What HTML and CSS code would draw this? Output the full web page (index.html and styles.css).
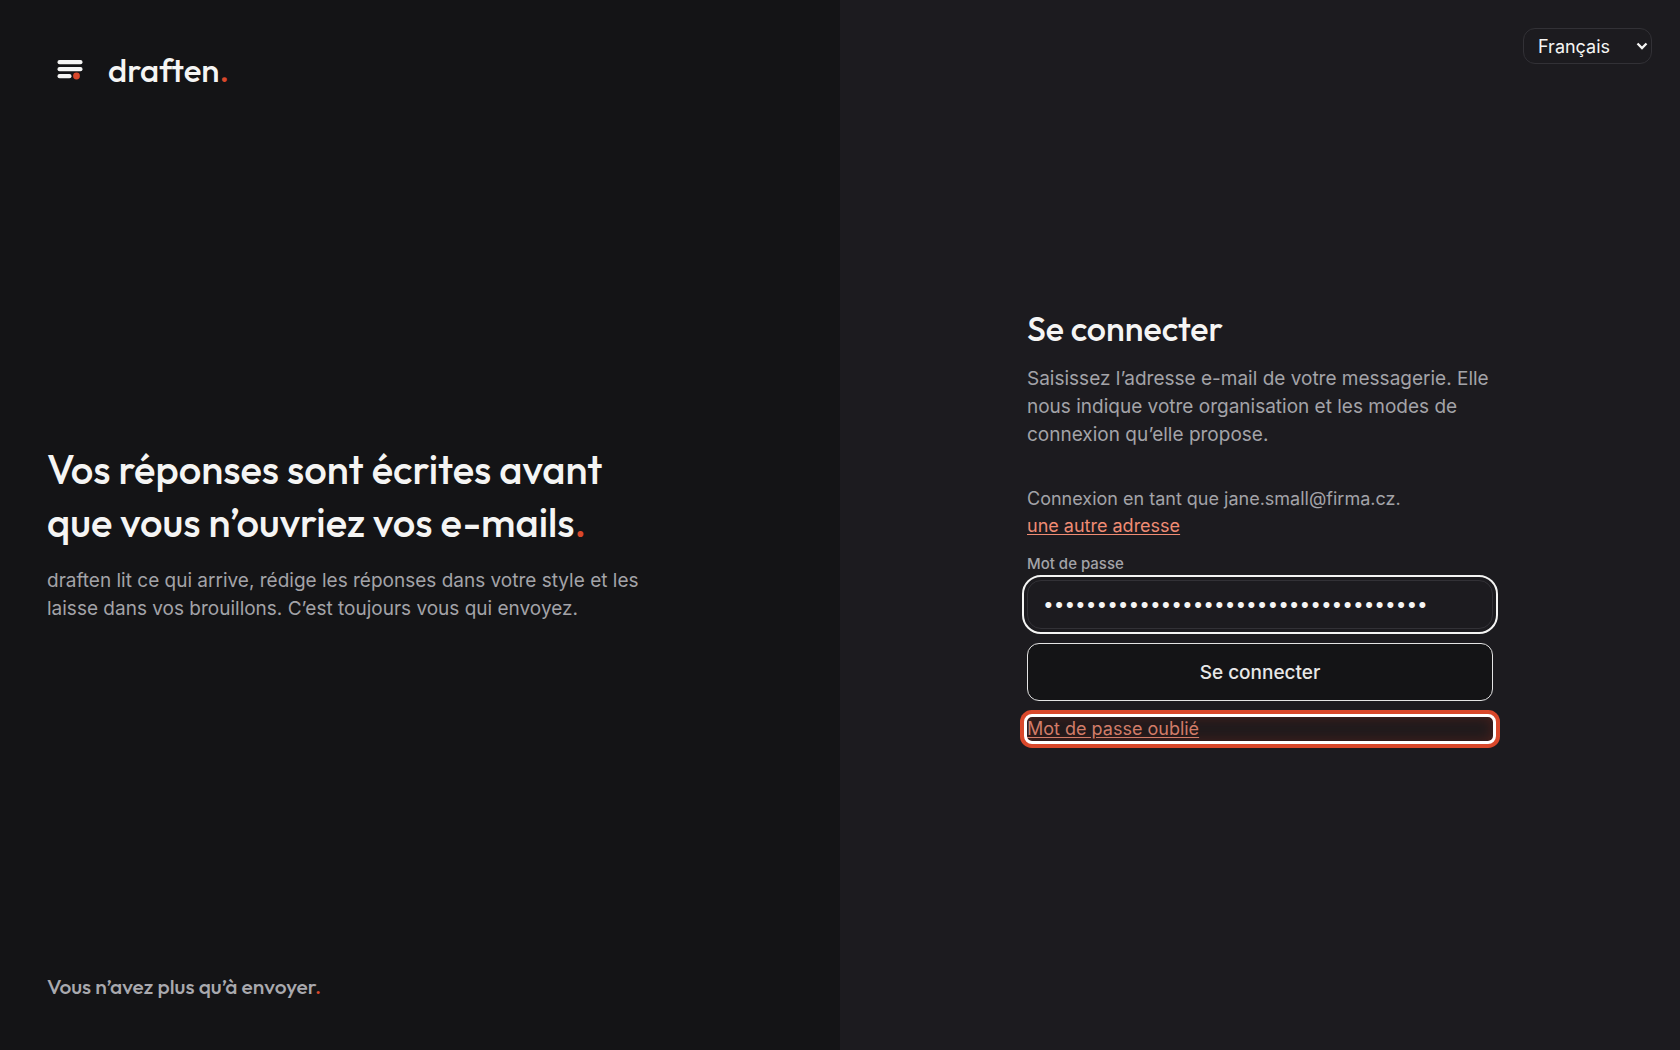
FILE: index.html
```html
<!DOCTYPE html>
<html lang="fr">
<head>
<meta charset="utf-8">
<meta name="viewport" content="width=device-width, initial-scale=1">
<title>draften. – Se connecter</title>
<link rel="stylesheet" href="styles.css">
</head>
<body>
<div class="page">
  <section class="intro">
    <a class="brand" href="#">
      <svg class="brand-mark" viewBox="0 0 46 46" aria-hidden="true">
        <g fill="#f5f5f4">
          <rect x="10.500" y="13" width="25" height="4.300" rx="2"/>
          <rect x="10.500" y="20" width="25" height="4.300" rx="2"/>
          <rect x="10.500" y="27" width="14" height="4.300" rx="2"/>
        </g>
        <circle cx="29.500" cy="29" r="3.400" fill="#d9482b"/>
      </svg>
      <span class="brand-name">draften<span class="dot">.</span></span>
    </a>
    <div class="pitch">
      <h1 class="pitch-title">Vos réponses sont écrites avant<br>que vous n’ouvriez vos e-mails<span class="dot">.</span></h1>
      <p class="pitch-text">draften lit ce qui arrive, rédige les réponses dans votre style et les laisse dans vos brouillons. C’est toujours vous qui envoyez.</p>
    </div>
    <p class="tagline">Vous n’avez plus qu’à envoyer<span class="dot">.</span></p>
  </section>
  <main class="panel">
    <div class="toolbar">
      <div class="language">
        <select class="language-select" aria-label="Langue">
          <option>Français</option>
          <option>English</option>
          <option>Čeština</option>
        </select>
        <svg class="language-arrow" viewBox="0 0 12 8" aria-hidden="true"><path d="M1.500 1.500 6 6l4.500-4.500" fill="none" stroke="#f5f5f4" stroke-width="2.300"/></svg>
      </div>
    </div>
    <div class="login">
      <h2 class="login-title">Se connecter</h2>
      <p class="login-text">Saisissez l’adresse e-mail de votre messagerie. Elle nous indique votre organisation et les modes de connexion qu’elle propose.</p>
      <form class="form">
        <div class="identity">
          <p>Connexion en tant que jane.small@firma.cz.</p>
          <a class="link" href="#">une autre adresse</a>
        </div>
        <div class="field">
          <label class="label" for="password">Mot de passe</label>
          <input class="input" id="password" type="password" value="aaaaaaaaaaaaaaaaaaaaaaaaaaaaaaaaaaaa">
        </div>
        <button class="submit" type="button">Se connecter</button>
        <a class="link forgot" href="#">Mot de passe oublié</a>
      </form>
    </div>
  </main>
</div>
</body>
</html>
```
FILE: styles.css
```css
* { box-sizing: border-box; }

body {
  margin: 0;
  background: #1c1b1f;
  color: #f5f5f4;
  color-scheme: dark;
  font: 18px/28px Inter, "Liberation Sans", sans-serif;
}

h1, h2, p { margin: 0; }

.page {
  display: grid;
  grid-template-columns: 1fr 1fr;
  min-height: 100vh;
}

.intro {
  display: flex;
  flex-direction: column;
  justify-content: space-between;
  padding: 47px 47px 48px;
  background: #141416;
}

.brand {
  display: flex;
  align-items: center;
  gap: 15px;
  color: inherit;
  text-decoration: none;
}

.brand-mark { width: 46px; height: 46px; }

.brand-name,
.pitch-title,
.login-title,
.tagline {
  font-family: Outfit, Lato, sans-serif;
  font-weight: 500;
}

.brand-name { font-size: 33px; line-height: 46px; }
.dot { color: #d9482b; }

.pitch { padding-top: 3px; }
.pitch-title { font-size: 40px; line-height: 53px; }

.pitch-text {
  max-width: 600px;
  margin-top: 18px;
  color: #a3a3a8;
  font-size: 19px;
}

.tagline { color: #a9a9ae; font-size: 21px; line-height: 32px; }

.panel {
  display: flex;
  flex-direction: column;
  padding: 28px;
}

.toolbar { display: flex; justify-content: flex-end; height: 0; }

.language {
  display: grid;
  align-items: center;
  width: 129px;
  height: 36px;
}

.language-select,
.language-arrow { grid-area: 1 / 1; }

.language-select {
  height: 36px;
  padding: 0 14px;
  border: 1px solid #323136;
  border-radius: 12px;
  appearance: none;
  background: #1c1b1f;
  color: #f5f5f4;
  font: 18px Inter, sans-serif;
}

.language-arrow {
  justify-self: end;
  width: 12px;
  height: 8px;
  margin-right: 4px;
  pointer-events: none;
}

.login {
  width: 100%;
  max-width: 466px;
  margin: auto;
  padding-bottom: 2px;
}

.login-title { font-size: 34px; line-height: 44px; }
.login-text { margin-top: 14px; color: #a3a3a8; font-size: 19px; }

.form {
  display: flex;
  flex-direction: column;
  gap: 14px;
  margin-top: 36px;
}

.identity { color: #a3a3a8; line-height: 27px; }
.link { color: #f08c74; text-underline-offset: 2px; }
.field { display: flex; flex-direction: column; gap: 5px; }

.label {
  color: #a3a3a8;
  font-size: 15px;
  font-weight: 500;
  line-height: 22px;
}

.input {
  height: 49px;
  padding: 0 15px;
  border: 1px solid #323136;
  border-radius: 14px;
  outline: 2px solid #f5f5f4;
  outline-offset: 3px;
  background: #1c1b1f;
  color: #f5f5f4;
  font: 19px Inter, sans-serif;
}

.submit {
  height: 58px;
  border: 1px solid #e4e4e4;
  border-radius: 12px;
  background: #141416;
  color: #e8e8e7;
  font: 500 19px Inter, sans-serif;
}

.forgot {
  margin-top: 2px;
  border-radius: 5px;
  outline: 3px solid #fff;
  background: #1f1a1c;
  box-shadow: 0 0 0 7px #d9482b, inset 0 0 14px #4a201c;
  color: #d27c68;
  line-height: 24px;
}

@media (max-width: 900px) {
  .page { grid-template-columns: 1fr; }
  .intro { gap: 32px; }
  .toolbar { height: auto; margin-bottom: 32px; }
}
```
